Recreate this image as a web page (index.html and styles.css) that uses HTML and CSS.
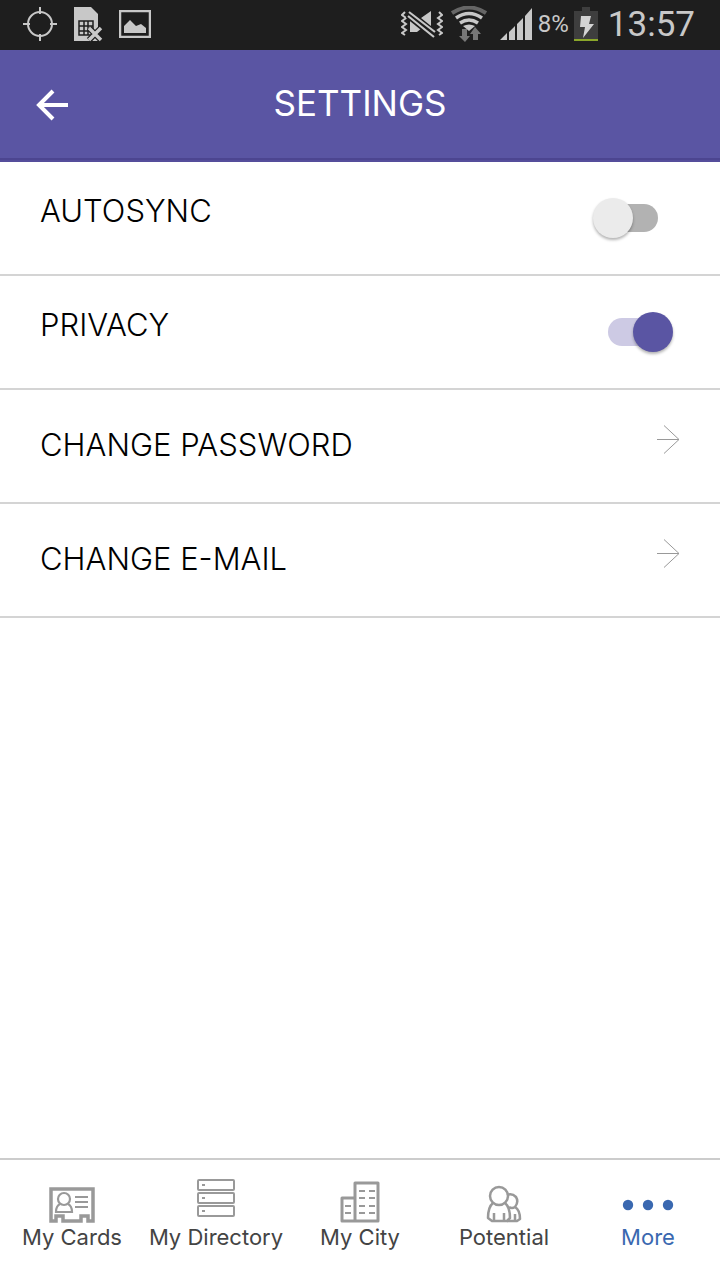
FILE: index.html
```html
<!DOCTYPE html>
<html lang="en">
<head>
  <meta charset="UTF-8">
  <meta name="viewport" content="width=device-width, initial-scale=1">
  <title>Settings</title>
  <link rel="stylesheet" href="styles.css">
</head>
<body>
  <div class="status-bar">
    <div class="status-left">
      <svg width="34" height="34" viewBox="0 0 34 34" fill="none" stroke="#c8c8c8" stroke-width="2">
        <circle cx="17" cy="17" r="12"/>
        <path d="M17 0v7M17 27v7M0 17h7M27 17h7"/>
      </svg>
      <svg width="30" height="36" viewBox="0 0 30 36">
        <path d="M1 1h17l7 7v27H1z" fill="#c8c8c8"/>
        <path d="M6 15h14v14H6zM11 15v14M15 15v14M6 20h14M6 25h14" fill="none" stroke="#1e1e1e" stroke-width="1.5"/>
        <path d="M16 22l12 12M28 22l-12 12" stroke="#1e1e1e" stroke-width="6"/>
        <path d="M16 22l12 12M28 22l-12 12" stroke="#c8c8c8" stroke-width="3.5"/>
      </svg>
      <svg width="32" height="28" viewBox="0 0 32 28">
        <path d="M1 1h30v26H1z" fill="none" stroke="#c8c8c8" stroke-width="2.5"/>
        <path d="M5 23v-7l6-6 6 6 5-2 5 4v5z" fill="#c8c8c8"/>
      </svg>
    </div>
    <div class="status-right">
      <svg width="42" height="28" viewBox="0 0 42 28">
        <path d="M4 2l-3 3 4 3-4 3 4 3-4 3 4 3-4 3 3 2M38 2l3 3-4 3 4 3-4 3 4 3-4 3 4 3-3 2" fill="none" stroke="#c8c8c8" stroke-width="2"/>
        <path d="M9 8v14h7l5-4zM20 8l10-7v15z" fill="#c8c8c8"/>
        <path d="M7 5l26 21" stroke="#1e1e1e" stroke-width="7"/>
        <path d="M8 2l26 20M7 6l26 21" stroke="#c8c8c8" stroke-width="2.2"/>
      </svg>
      <svg width="36" height="36" viewBox="0 0 36 36" fill="none">
        <path d="M1 7q17-11 34 0" stroke="#666" stroke-width="4"/>
        <path d="M5 12q13-9 26 0M9 17q9-6 18 0" stroke="#c8c8c8" stroke-width="3.5"/>
        <path d="M12 20q6-3 12 0l-6 5z" fill="#c8c8c8"/>
        <path d="M11 23h5v7h3l-5 6-6-6h3zM22 34h5v-6h3l-6-7-5 7h3z" fill="#777"/>
      </svg>
      <svg class="signal" width="34" height="34" viewBox="0 0 34 34" fill="#c8c8c8">
        <path d="M1 33l7-7v7zM10 25l6-6v14h-6zM18 17l6-6v22h-6zM26 9l7-8v32h-7z"/>
      </svg>
      <span class="battery-level">8%</span>
      <svg class="battery" width="24" height="36" viewBox="0 0 24 36">
        <path d="M0 5h8V1h8v4h8v28H0z" fill="#3e3e3e"/>
        <path d="M0 33h24v2H0z" fill="#8aa62a"/>
        <path d="M7 10h10l-2 8h5L9 32l2-11H6z" fill="#d4d4d4"/>
      </svg>
      <span class="clock">13:57</span>
    </div>
  </div>

  <header class="header">
    <button class="back" type="button" aria-label="Back">
      <svg width="34" height="32" viewBox="0 0 34 32" fill="none" stroke="#fff" stroke-width="4">
        <path d="M32 16H3M17 2L3 16l14 14"/>
      </svg>
    </button>
    <h1>SETTINGS</h1>
  </header>

  <main class="settings">
    <div class="row">
      <label class="row-label" for="autosync">AUTOSYNC</label>
      <input class="switch" type="checkbox" id="autosync">
    </div>
    <div class="row">
      <label class="row-label" for="privacy">PRIVACY</label>
      <input class="switch" type="checkbox" id="privacy" checked>
    </div>
    <a class="row row-link" href="#password">
      <span>CHANGE PASSWORD</span>
      <svg class="arrow" width="24" height="30" viewBox="0 0 24 30" fill="none" stroke="#999">
        <path d="M1 14.5h22M8 .5l15 14-15 14"/>
      </svg>
    </a>
    <a class="row row-link" href="#email">
      <span>CHANGE E-MAIL</span>
      <svg class="arrow" width="24" height="30" viewBox="0 0 24 30" fill="none" stroke="#999">
        <path d="M1 14.5h22M8 .5l15 14-15 14"/>
      </svg>
    </a>
  </main>

  <nav class="tabs">
    <a class="tab" href="#cards">
      <svg width="46" height="36" viewBox="0 0 46 36" fill="none" stroke="#999" stroke-width="3.5">
        <path d="M2 2h42v32h-5v-5h-7v5H14v-5H7v5H2z"/>
        <g stroke-width="2.2">
          <circle cx="15" cy="12" r="6"/>
          <path d="M11 17q-4 2-4 8h16q0-6-4-8M26 10h13M26 15h13M26 20h13"/>
        </g>
      </svg>
      My Cards
    </a>
    <a class="tab" href="#directory">
      <svg class="icon-directory" width="40" height="40" viewBox="0 0 40 40" fill="none" stroke="#999" stroke-width="2">
        <rect x="2" y="2" width="36" height="10" rx="1"/>
        <rect x="2" y="15" width="36" height="10" rx="1"/>
        <rect x="2" y="28" width="36" height="10" rx="1"/>
        <path d="M6 7h3M6 20h3M6 33h3"/>
      </svg>
      My Directory
    </a>
    <a class="tab" href="#city">
      <svg width="40" height="42" viewBox="0 0 40 42" fill="none" stroke="#999" stroke-width="3" stroke-linejoin="round">
        <path d="M15 2h23v38H15zM15 17H2v23h13"/>
        <path d="M19 10h6M29 10h6M19 17h6M29 17h6M19 25h6M29 25h6M19 32h6M29 32h6M5 25h6M5 32h6" stroke-width="2"/>
      </svg>
      My City
    </a>
    <a class="tab" href="#potential">
      <svg width="36" height="38" viewBox="0 0 36 38" fill="none" stroke="#999" stroke-width="2.5" stroke-linejoin="round">
        <circle cx="13" cy="11" r="9"/>
        <path d="M7 18Q2 22 2 33l4 3h15l3-3q0-11-5-15M8 28v8M18 28v8"/>
        <path d="M21 10q5-2 9 2 3 5-1 10 5 3 5 12l-3 2H21M23 22q3 2 6 0M29 29v7"/>
      </svg>
      Potential
    </a>
    <a class="tab tab-active" href="#more" aria-current="page">
      <svg class="icon-more" width="52" height="12" viewBox="0 0 52 12" fill="#3a68b0">
        <circle cx="6" cy="6" r="5.2"/>
        <circle cx="26" cy="6" r="5.2"/>
        <circle cx="46" cy="6" r="5.2"/>
      </svg>
      More
    </a>
  </nav>
</body>
</html>
```
FILE: styles.css
```css
* {
  box-sizing: border-box;
}
body {
  margin: 0;
  min-height: 100vh;
  display: flex;
  flex-direction: column;
  font-family: Inter, "Liberation Sans", sans-serif;
  background-color: #fff;
  color: #000;
}
svg {
  display: block;
}
a {
  color: inherit;
  text-decoration: none;
}

.status-bar {
  height: 50px;
  padding: 0 25px 2px 23px;
  display: flex;
  align-items: center;
  justify-content: space-between;
  background: #1e1e1e;
  color: #c8c8c8;
  font-family: Roboto, sans-serif;
}
.status-left,
.status-right {
  display: flex;
  align-items: center;
  gap: 16px;
}
.status-right {
  gap: 8px;
}
.signal {
  margin-left: 4px;
}
.battery-level {
  margin: 0 -3px;
  font-size: 24px;
}
.clock {
  margin-left: 2px;
  font-size: 35px;
}

.header {
  height: 112px;
  padding: 0 32px;
  display: grid;
  grid-template-columns: 40px 1fr 40px;
  align-items: center;
  background: #5a55a3;
  border-bottom: 2px solid #554d9b;
  box-shadow: inset 0 -2px #4c4590;
  color: #fff;
}
.header h1 {
  margin: 0;
  padding-bottom: 4px;
  font-size: 35px;
  font-weight: 400;
  text-align: center;
}
.back {
  padding: 4px;
  border: 0;
  background: none;
}

.settings {
  flex: 1;
}
.row {
  height: 114px;
  padding: 0 40px;
  display: flex;
  align-items: center;
  justify-content: space-between;
  border-bottom: 2px solid #d4d4d4;
  font-size: 31px;
  font-weight: 300;
}
.row-label {
  padding-bottom: 16px;
}
.row-link {
  padding-bottom: 4px;
}
.arrow {
  margin-bottom: 8px;
}

.switch {
  appearance: none;
  width: 82px;
  height: 42px;
  margin: 0 6px 0 0;
  padding: 0 16px;
  display: flex;
  align-items: center;
}
.switch::before {
  content: "";
  flex: none;
  width: 50px;
  height: 28px;
  border-radius: 14px;
  background: #b2b2b2;
}
.switch::after {
  content: "";
  flex: none;
  width: 40px;
  height: 40px;
  margin-left: -65px;
  border-radius: 50%;
  background: #ebebeb;
  box-shadow: 0 2px 3px rgba(0, 0, 0, 0.3);
}
.switch:checked::before {
  background: #cdcae4;
}
.switch:checked::after {
  margin-left: -25px;
  background: #5a55a3;
}

.tabs {
  height: 122px;
  padding-bottom: 29px;
  display: grid;
  grid-template-columns: repeat(5, 1fr);
  border-top: 2px solid #ccc;
}
.tab {
  display: flex;
  flex-direction: column;
  align-items: center;
  justify-content: flex-end;
  color: #444;
  font-size: 22px;
  line-height: 28px;
  white-space: nowrap;
}
.icon-directory {
  margin-bottom: 5px;
}
.icon-more {
  margin-bottom: 12px;
}
.tab-active {
  color: #3a68b0;
}
```
